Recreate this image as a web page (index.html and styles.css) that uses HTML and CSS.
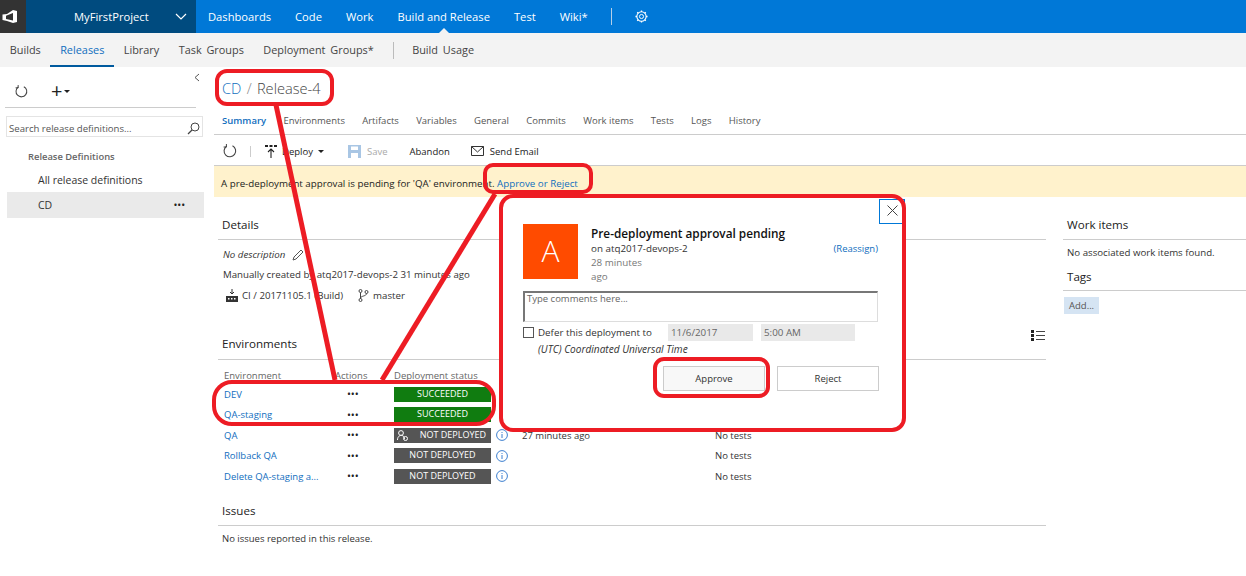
FILE: index.html
```html
<!DOCTYPE html>
<html lang="en">
<head>
  <meta charset="UTF-8" />
  <title>CD / Release-4</title>
  <link rel="stylesheet" href="styles.css">
</head>
<body>

<header class="topbar">
  <div class="logo">
    <svg width="15" height="13" viewBox="0 0 15 13"><path fill-rule="evenodd" d="M0.5 4.5 L5 4 L11 0 L15 1 V12 L11 13 L5 11 L0.5 10 Z M4 5.8 L11 3 V10.5 L4 9 Z" fill="#fff"/></svg>
  </div>
  <div class="project">
    <span>MyFirstProject</span>
    <svg width="12" height="7" viewBox="0 0 12 7"><path d="M1 1 L6 6 L11 1" fill="none" stroke="#fff" stroke-width="1.2"/></svg>
  </div>
  <nav class="mainnav">
    <a>Dashboards</a>
    <a>Code</a>
    <a>Work</a>
    <a class="current">Build and Release</a>
    <a>Test</a>
    <a>Wiki*</a>
    <i class="navsep"></i>
    <svg class="gear" width="13" height="13" viewBox="0 0 14 14"><circle cx="7" cy="7" r="2.2" fill="none" stroke="#fff"/><circle cx="7" cy="7" r="5" fill="none" stroke="#fff" stroke-width="1.1"/><path d="M7 0.5V2.2M7 11.8v1.7M0.5 7h1.7M11.8 7h1.7M2.4 2.4l1.2 1.2M10.4 10.4l1.2 1.2M2.4 11.6l1.2-1.2M10.4 3.6l1.2-1.2" stroke="#fff" stroke-width="1.4"/></svg>
  </nav>
</header>

<div class="subnav">
  <a>Builds</a>
  <a class="current">Releases</a>
  <a>Library</a>
  <a>Task Groups</a>
  <a>Deployment Groups*</a>
  <i class="subsep"></i>
  <a>Build Usage</a>
</div>

<div class="layout">
  <aside class="sidebar">
    <div class="collapse">
      <svg width="6" height="9" viewBox="0 0 6 9"><path d="M5 1 L1 4.5 L5 8" fill="none" stroke="#555"/></svg>
    </div>
    <div class="sidetools">
      <svg width="13" height="13" viewBox="0 0 14 14"><path d="M9.5 1.8 A5.8 5.8 0 1 1 3.6 2.2" fill="none" stroke="#444" stroke-width="1.1"/><path d="M3.4 0 V3 H0.6" fill="none" stroke="#444"/></svg>
      <span class="plus">+</span><i class="caret"></i>
    </div>
    <div class="search">
      <span>Search release definitions...</span>
      <svg width="13" height="13" viewBox="0 0 13 13"><circle cx="8" cy="5" r="4" fill="none" stroke="#444"/><path d="M5 8 L1 12" stroke="#444" stroke-width="1.3"/></svg>
    </div>
    <div class="treehead">Release Definitions</div>
    <div class="treeitem">All release definitions</div>
    <div class="treeitem selected">CD <span class="dots">•••</span></div>
  </aside>

  <main class="main">
    <h1 class="title"><span class="crumb">CD</span> <span class="slash">/</span> Release-4</h1>

    <div class="tabs">
      <a class="current">Summary</a>
      <a>Environments</a>
      <a>Artifacts</a>
      <a>Variables</a>
      <a>General</a>
      <a>Commits</a>
      <a>Work items</a>
      <a>Tests</a>
      <a>Logs</a>
      <a>History</a>
    </div>

    <div class="toolbar">
      <svg width="14" height="14" viewBox="0 0 14 14"><path d="M9.5 1.8 A5.8 5.8 0 1 1 3.6 2.2" fill="none" stroke="#444" stroke-width="1.1"/><path d="M3.4 0 V3 H0.6" fill="none" stroke="#444"/></svg>
      <i class="toolsep"></i>
      <span class="tool deploy">
        <svg width="14" height="15" viewBox="0 0 14 15"><path d="M1 1h3v2H1zM5.5 1h3v2h-3zM10 1h3v2h-3z" fill="#222"/><path d="M7 14V5M4 8l3-3 3 3" fill="none" stroke="#222" stroke-width="1.1"/></svg>
        Deploy <i class="caret"></i>
      </span>
      <span class="tool save">
        <svg width="13" height="13" viewBox="0 0 13 13"><path d="M0 0h13v13H0z" fill="#a9c6e4"/><path d="M3 1.5h7v3.5H3zM3 8h7v5H3z" fill="#fff"/></svg>
        Save
      </span>
      <span class="tool">Abandon</span>
      <span class="tool">
        <svg width="13" height="10" viewBox="0 0 13 10"><path d="M0.5 0.5h12v9h-12zM0.5 0.5 L6.5 6 L12.5 0.5" fill="none" stroke="#333"/></svg>
        Send Email
      </span>
    </div>

    <div class="banner">A pre-deployment approval is pending for 'QA' environment. <a>Approve or Reject</a></div>

    <div class="columns">
      <div class="leftcol">
        <section class="details">
          <h2>Details</h2>
          <p class="desc">
            <em>No description</em>
            <svg width="12" height="12" viewBox="0 0 12 12"><path d="M1 11 L2 8 L9 1 L11 3 L4 10 Z" fill="none" stroke="#555"/></svg>
          </p>
          <p class="created">Manually created by atq2017-devops-2 31 minutes ago</p>
          <p class="artifact">
            <svg width="12" height="13" viewBox="0 0 12 13"><path d="M0 7h12v6H0z" fill="#333"/><path d="M6 0v5M4 3l2 2 2-2" fill="none" stroke="#333"/><path d="M2 9h1.5v1.5H2zM5 9h1.5v1.5H5zM8 9h1.5v1.5H8z" fill="#fff"/></svg>
            <span>CI / 20171105.1 (Build)</span>
            <svg class="branch" width="11" height="13" viewBox="0 0 11 13"><circle cx="2.5" cy="2" r="1.5" fill="none" stroke="#444"/><circle cx="2.5" cy="11" r="1.5" fill="none" stroke="#444"/><circle cx="8.5" cy="3" r="1.5" fill="none" stroke="#444"/><path d="M2.5 3.5v6M8.5 4.5c0 3-6 2-6 5" fill="none" stroke="#444"/></svg>
            <span>master</span>
          </p>
        </section>

        <section class="environments">
          <div class="envhead">
            <h2>Environments</h2>
            <svg width="14" height="11" viewBox="0 0 14 11"><path d="M0 0h3v3H0zM0 4h3v3H0zM0 8h3v3H0z" fill="#222"/><path d="M5 1.5h9M5 5.5h9M5 9.5h9" stroke="#444"/></svg>
          </div>
          <div class="envtable">
            <div class="envrow labels"><span>Environment</span><span>Actions</span><span>Deployment status</span></div>
            <div class="envrow">
              <a>DEV</a><span class="dots">•••</span><span class="status ok">SUCCEEDED</span>
            </div>
            <div class="envrow">
              <a>QA-staging</a><span class="dots">•••</span><span class="status ok">SUCCEEDED</span>
            </div>
            <div class="envrow">
              <a>QA</a><span class="dots">•••</span>
              <span class="status idle withicon">
                <svg width="11" height="11" viewBox="0 0 11 11"><circle cx="4" cy="3" r="2.4" fill="none" stroke="#fff"/><path d="M0.5 10c0-6 7-6 7-1" fill="none" stroke="#fff"/><circle cx="8.5" cy="8.5" r="2" fill="none" stroke="#fff"/></svg>
                NOT DEPLOYED
              </span>
              <svg class="info" width="12" height="12" viewBox="0 0 12 12"><circle cx="6" cy="6" r="5.4" fill="none" stroke="#3d7fcf"/><path d="M6 5v4M6 3v1" stroke="#3d7fcf"/></svg>
              <span class="when">27 minutes ago</span>
              <span class="tests">No tests</span>
            </div>
            <div class="envrow">
              <a>Rollback QA</a><span class="dots">•••</span><span class="status idle">NOT DEPLOYED</span>
              <svg class="info" width="12" height="12" viewBox="0 0 12 12"><circle cx="6" cy="6" r="5.4" fill="none" stroke="#3d7fcf"/><path d="M6 5v4M6 3v1" stroke="#3d7fcf"/></svg>
              <span class="when"></span>
              <span class="tests">No tests</span>
            </div>
            <div class="envrow">
              <a>Delete QA-staging a...</a><span class="dots">•••</span><span class="status idle">NOT DEPLOYED</span>
              <svg class="info" width="12" height="12" viewBox="0 0 12 12"><circle cx="6" cy="6" r="5.4" fill="none" stroke="#3d7fcf"/><path d="M6 5v4M6 3v1" stroke="#3d7fcf"/></svg>
              <span class="when"></span>
              <span class="tests">No tests</span>
            </div>
          </div>
        </section>

        <section class="issues">
          <h2>Issues</h2>
          <p>No issues reported in this release.</p>
        </section>
      </div>

      <div class="rightcol">
        <h2>Work items</h2>
        <p>No associated work items found.</p>
        <h2 class="tagshead">Tags</h2>
        <span class="addtag">Add...</span>
      </div>
    </div>
  </main>
</div>

<!-- approval popup -->
<div class="popup">
  <button class="close">
    <svg width="11" height="11" viewBox="0 0 11 11"><path d="M0.5 0.5 L10.5 10.5 M10.5 0.5 L0.5 10.5" stroke="#444"/></svg>
  </button>
  <div class="approver">
    <div class="avatar">A</div>
    <div class="approverinfo">
      <h3>Pre-deployment approval pending</h3>
      <div class="onwho"><span>on atq2017-devops-2</span><a>(Reassign)</a></div>
      <div class="ago">28 minutes<br>ago</div>
    </div>
  </div>
  <div class="comments">Type comments here...</div>
  <div class="defer">
    <i class="check"></i>
    <span class="deferlabel">Defer this deployment to</span>
    <span class="field datefield">11/6/2017</span>
    <span class="field timefield">5:00 AM</span>
  </div>
  <div class="zone">(UTC) Coordinated Universal Time</div>
  <div class="buttons">
    <button class="approve">Approve</button>
    <button>Reject</button>
  </div>
</div>

<!-- red markup drawn over the screenshot -->
<svg class="markup" width="1246" height="576" viewBox="0 0 1246 576">
  <g fill="none" stroke="#ed1c24" stroke-width="4">
    <rect x="217" y="71" width="115" height="33" rx="10"/>
    <path d="M276 105 L335 380" stroke-width="5"/>
    <rect x="485" y="165" width="106" height="27" rx="8"/>
    <path d="M495 194 L382 380" stroke-width="5"/>
    <rect x="214" y="382" width="280" height="42" rx="18"/>
    <rect x="501" y="196" width="403" height="234" rx="12"/>
    <rect x="655" y="359" width="113" height="37" rx="9"/>
  </g>
</svg>

</body>
</html>
```

FILE: styles.css
```css
* {
  box-sizing: border-box;
}

body {
  margin: 0;
  width: 1246px;
  height: 576px;
  overflow: hidden;
  position: relative;
  background: #fff;
  color: #333;
  font-family: "Open Sans", "Noto Sans", sans-serif;
  font-size: 10px;
}

h1, h2, h3, p {
  margin: 0;
  font-weight: normal;
}

a {
  color: #106ebe;
}

.topbar {
  display: flex;
  height: 33px;
  background: #0078d7;
  color: #fff;
}

.logo {
  width: 26px;
  background: #333;
  display: flex;
  align-items: center;
  padding-left: 2px;
}

.project {
  width: 170px;
  background: #004b7f;
  display: flex;
  align-items: center;
  justify-content: space-between;
  padding: 0 9px 0 48px;
  font-size: 11.2px;
}

.mainnav {
  display: flex;
  align-items: center;
  gap: 24px;
  padding-left: 12px;
  font-size: 11.2px;
}

.mainnav a {
  color: #fff;
}

.mainnav .current {
  position: relative;
  height: 33px;
  line-height: 33px;
}

.mainnav .current::after {
  content: "";
  position: absolute;
  left: 50%;
  bottom: 0;
  margin-left: -5px;
  border: 5px solid transparent;
  border-top: 0;
  border-bottom-color: #f3f3f3;
}

.navsep {
  width: 1px;
  height: 17px;
  background: #b5cfe8;
  margin-left: -1px;
}

.gear {
  margin-left: -1px;
}

.subnav {
  display: flex;
  align-items: stretch;
  height: 34px;
  background: #f3f3f3;
  font-size: 10.9px;
  word-spacing: 2px;
}

.subnav a {
  color: #444;
  line-height: 34px;
  padding: 0 9.7px;
}

.subnav .current {
  color: #106ebe;
  border-bottom: 2px solid #005a9e;
}

.subsep {
  width: 1px;
  height: 17px;
  align-self: center;
  background: #bbb;
  margin: 0 8px 0 10px;
}

.layout {
  display: flex;
  height: 509px;
}

.sidebar {
  width: 214px;
  flex: none;
  padding-left: 5px;
  position: relative;
  font-size: 10.4px;
}

.collapse {
  position: absolute;
  left: 194px;
  top: 4px;
}

.sidetools {
  display: flex;
  align-items: center;
  height: 41px;
  padding: 8px 0 0 10px;
  width: 191px;
  border-bottom: 1px solid #ccc;
}

.plus {
  margin-left: 23px;
  font-size: 20px;
  line-height: 20px;
  color: #222;
}

.caret {
  display: inline-block;
  border: 3px solid transparent;
  border-top: 3px solid #222;
  border-bottom: 0;
  margin-left: 2px;
}

.search {
  display: flex;
  justify-content: space-between;
  align-items: center;
  width: 197px;
  height: 21px;
  margin: 8px 0 0 1px;
  border: 1px solid #e4e4e4;
  padding: 3px 2px 0 2px;
  font-size: 9.6px;
  color: #555;
}

.treehead {
  margin: 13px 0 0 23px;
  font-weight: 600;
  font-size: 9.4px;
  color: #666;
}

.treeitem {
  display: flex;
  align-items: center;
  justify-content: space-between;
  height: 26px;
  margin: 3px 10px 0 2px;
  padding: 2px 19px 0 31px;
  font-size: 10.5px;
}

.treeitem.selected {
  background: #eaeaea;
  margin-top: 0;
  padding-top: 0;
  color: #333;
}

.dots {
  font-size: 10.5px;
  line-height: 10px;
  color: #222;
  letter-spacing: -0.1px;
}

.main {
  flex: 1;
  position: relative;
}

.title {
  font-size: 14.6px;
  word-spacing: 1.5px;
  padding: 11px 0 0 8px;
  height: 44px;
  color: #444;
  font-weight: 300;
}

.crumb {
  color: #106ebe;
}

.slash {
  color: #888;
}

.tabs {
  display: flex;
  gap: 17.3px;
  height: 24px;
  padding: 3px 0 0 8px;
  border-bottom: 1px solid #ccc;
  font-size: 9.5px;
}

.tabs a {
  color: #555;
}

.tabs .current {
  color: #106ebe;
  font-weight: 600;
}

.toolbar {
  display: flex;
  align-items: center;
  height: 31px;
  padding: 2px 0 0 9px;
  font-size: 9.5px;
  color: #222;
  border-bottom: 1px solid #ccc;
}

.toolsep {
  width: 1px;
  height: 11px;
  background: #ccc;
  margin: 0 13px;
}

.tool {
  display: flex;
  align-items: center;
  gap: 6px;
  margin-right: 21px;
}

.deploy {
  gap: 4px;
  margin-right: 23px;
}

.deploy .caret {
  margin-left: 1px;
}

.save {
  margin-left: 1px;
  margin-right: 22px;
  color: #aaa;
}

.banner {
  height: 31px;
  padding: 11px 0 0 7px;
  background: #fff2cc;
  font-size: 9.75px;
  color: #222;
}

.columns {
  display: flex;
}

.leftcol {
  width: 828px;
  margin-left: 4px;
  flex: none;
}

.rightcol {
  width: 183px;
  margin-left: 17px;
  padding-top: 20px;
}

.columns h2 {
  font-size: 11.6px;
  color: #222;
  font-weight: 500;
  height: 23px;
  padding-left: 4px;
  line-height: 16px;
  border-bottom: 1px solid #ccc;
}

.rightcol p {
  font-size: 9.7px;
  padding: 6px 0 0 4px;
  height: 25px;
}

.columns .tagshead {
  margin-top: 4px;
  height: 22px;
}

.addtag {
  display: inline-block;
  margin: 6px 0 0 1px;
  padding: 0 5px;
  line-height: 17px;
  background: #d5e4f3;
  color: #555;
  font-size: 9.5px;
}

.details {
  padding-top: 20px;
  height: 112px;
}

.details p {
  padding-left: 5px;
  font-size: 9.7px;
}

.desc {
  display: flex;
  align-items: center;
  gap: 7px;
  margin-top: 8px;
}

.created {
  margin-top: 7px;
}

.artifact {
  display: flex;
  align-items: center;
  margin-top: 8px;
  gap: 4px;
}

.artifact svg {
  margin-left: 3px;
}

.artifact .branch {
  margin-left: 11px;
}

.environments {
  padding-top: 27px;
}

.envhead {
  position: relative;
}

.columns .envhead h2 {
  height: 24px;
}

.envhead svg {
  position: absolute;
  right: 1px;
  top: -6px;
}

.envtable {
  padding: 9px 0 0 6px;
}

.envrow {
  display: grid;
  grid-template-columns: 111px 59px 97px 17px 207px auto;
  align-items: center;
  height: 20.5px;
  font-size: 9.5px;
}

.envrow.labels {
  height: 15px;
  grid-template-columns: 111px 59px auto;
  color: #666;
  align-items: start;
}

.envrow a {
  color: #106ebe;
}

.envrow .dots {
  padding-left: 12px;
}

.status {
  height: 15px;
  line-height: 14px;
  text-align: center;
  color: #fff;
  font-size: 9px;
}

.status.ok {
  background: #107c10;
}

.status.idle {
  background: #555;
}

.status.withicon {
  display: flex;
  align-items: center;
  justify-content: space-between;
  padding: 0 5px 0 3px;
}

.info {
  margin-left: 5px;
}

.when {
  padding-left: 14px;
}

.issues {
  padding-top: 16px;
}

.issues p {
  padding: 6px 0 0 4px;
  font-size: 9.5px;
}

/* popup lies over the summary */
.popup {
  position: absolute;
  left: 502px;
  top: 197px;
  width: 401px;
  height: 232px;
  background: #fff;
  padding: 27px 24px 0 21px;
  font-size: 9.8px;
}

.close {
  position: absolute;
  right: -2px;
  top: 2px;
  width: 26px;
  height: 25px;
  padding: 0;
  border: 1px solid #0078d7;
  background: #fff;
}

.approver {
  display: flex;
  gap: 13px;
}

.avatar {
  width: 55px;
  height: 55px;
  background: #ff4b00;
  color: #fff;
  text-align: center;
  line-height: 53px;
  font-size: 30px;
  font-weight: 300;
}

.approverinfo {
  flex: 1;
  margin-top: 1px;
}

.approverinfo h3 {
  font-size: 11.8px;
  font-weight: 600;
  color: #111;
  line-height: 16px;
}

.onwho {
  display: flex;
  justify-content: space-between;
  margin: 1px 1px 0 0;
}

.onwho a {
  font-size: 9.5px;
}

.ago {
  color: #777;
  line-height: 14px;
  margin-top: 1px;
}

.comments {
  height: 31px;
  margin: 7px 1px 0 0;
  padding: 0 2px;
  border: 1px solid #ddd;
  border-top: 2px solid #777;
  border-left: 2px solid #777;
  color: #666;
  font-size: 9.5px;
  line-height: 12px;
}

.defer {
  display: flex;
  align-items: center;
  margin-top: 2px;
}

.check {
  width: 11px;
  height: 11px;
  border: 1px solid #555;
  margin-right: 4px;
}

.deferlabel {
  width: 130px;
  margin-top: -1px;
}

.field {
  height: 17px;
  line-height: 18px;
  padding-left: 3px;
  background: #e9e9e9;
  color: #666;
}

.datefield {
  width: 85px;
  margin-right: 8px;
}

.timefield {
  width: 94px;
}

.zone {
  margin: 1px 0 0 15px;
  font-style: italic;
  font-size: 10.1px;
}

.buttons {
  display: flex;
  justify-content: flex-end;
  gap: 12px;
  margin-top: 10px;
}

.buttons button {
  width: 102px;
  height: 25px;
  border: 1px solid #ccc;
  background: #fff;
  color: #333;
  font: 9.5px "Open Sans", sans-serif;
}

.buttons .approve {
  background: #f8f8f8;
}

.markup {
  position: absolute;
  left: 0;
  top: 0;
  pointer-events: none;
}
```
